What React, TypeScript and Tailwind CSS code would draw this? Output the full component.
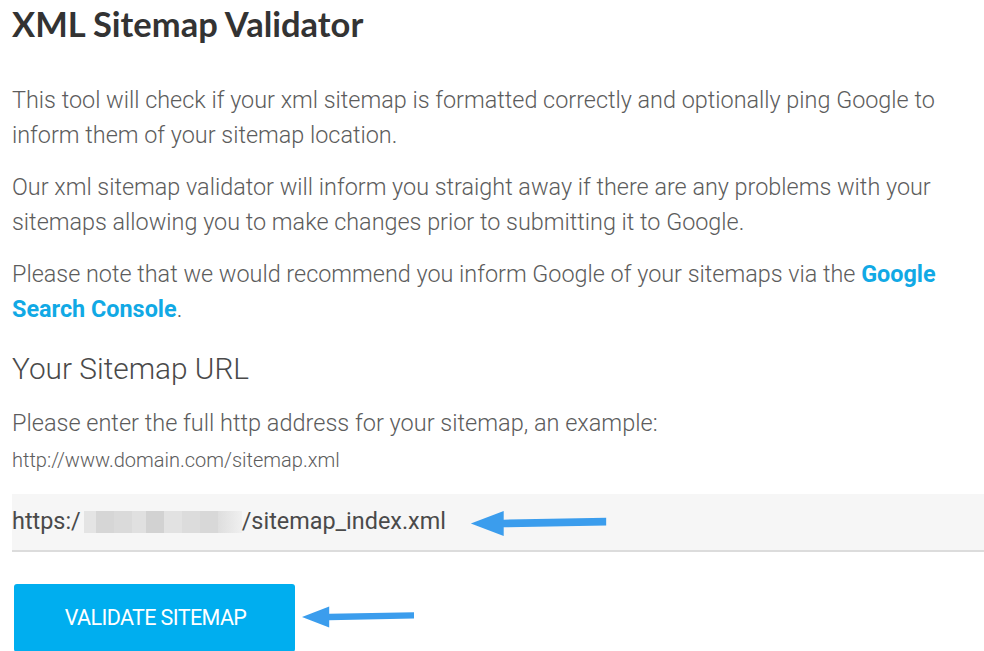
import React from "react";

function Arrow({ className }: { className?: string }) {
  return (
    <svg viewBox="0 0 140 30" className={className} fill="#3b9ded">
      <polygon points="0,15 34,2 34,11 140,9 140,17 34,19 34,28" />
    </svg>
  );
}

export default function App() {
  return (
    <div className="min-h-[651px] w-[984px] overflow-hidden bg-white pl-3 text-[#5c5c5c] font-['Roboto',sans-serif]">
      <h1 className="pt-[2px] font-['Lato',sans-serif] text-[34.5px] font-bold leading-[44px] text-[#333]">
        XML Sitemap Validator
      </h1>

      <div className="mt-[37px] flex flex-col gap-[17px] pr-[12px] text-[23.4px] font-light leading-[35px]">
        <p>
          This tool will check if your xml sitemap is formatted correctly and optionally ping Google to inform them of
          your sitemap location.
        </p>
        <p>
          Our xml sitemap validator will inform you straight away if there are any problems with your sitemaps allowing
          you to make changes prior to submitting it to Google.
        </p>
        <p>
          Please note that we would recommend you inform Google of your sitemaps via the{" "}
          <a className="font-bold text-[#11a9e5]">Google Search Console</a>.
        </p>
      </div>

      <h2 className="mt-[22px] text-[29.8px] font-light leading-[40px] text-[#4a4a4a]">Your Sitemap URL</h2>

      <p className="mt-[19px] text-[23.5px] font-light leading-[30px]">
        Please enter the full http address for your sitemap, an example:
      </p>
      <p className="mt-[10px] text-[20px] font-light leading-[24px]">http://www.domain.com/sitemap.xml</p>

      <div className="relative mt-[22px] flex h-[58px] items-center border-b-2 border-[#dcdcdc] bg-[#f6f6f6] text-[23.4px] text-[#4a4a4a]">
        <span>https:/</span>
        <span className="ml-[3px] flex h-[22px] w-[158px]">
          <span className="w-[12px] bg-[#e4e4e4]" />
          <span className="w-[18px] bg-[#d6d6d6]" />
          <span className="w-[18px] bg-[#dadada]" />
          <span className="w-[14px] bg-[#e0e0e0]" />
          <span className="w-[18px] bg-[#d2d2d2]" />
          <span className="w-[18px] bg-[#e2e2e2]" />
          <span className="w-[18px] bg-[#dcdcdc]" />
          <span className="w-[18px] bg-[#d8d8d8]" />
          <span className="flex-1 bg-gradient-to-r from-[#dedede] to-[#f0f0f0]" />
        </span>
        <span>/sitemap_index.xml</span>
        <Arrow className="absolute left-[456px] top-[15px] h-[29px] w-[141px]" />
      </div>

      <div className="relative mt-[32px]">
        <button className="ml-[2px] h-[68px] w-[281px] rounded-[3px] bg-[#00aeef] pl-[2px] text-[21.5px] leading-none tracking-[-0.6px] text-white">
          VALIDATE SITEMAP
        </button>
        <Arrow className="absolute left-[290px] top-[19px] h-[28px] w-[112px]" />
      </div>
    </div>
  );
}
